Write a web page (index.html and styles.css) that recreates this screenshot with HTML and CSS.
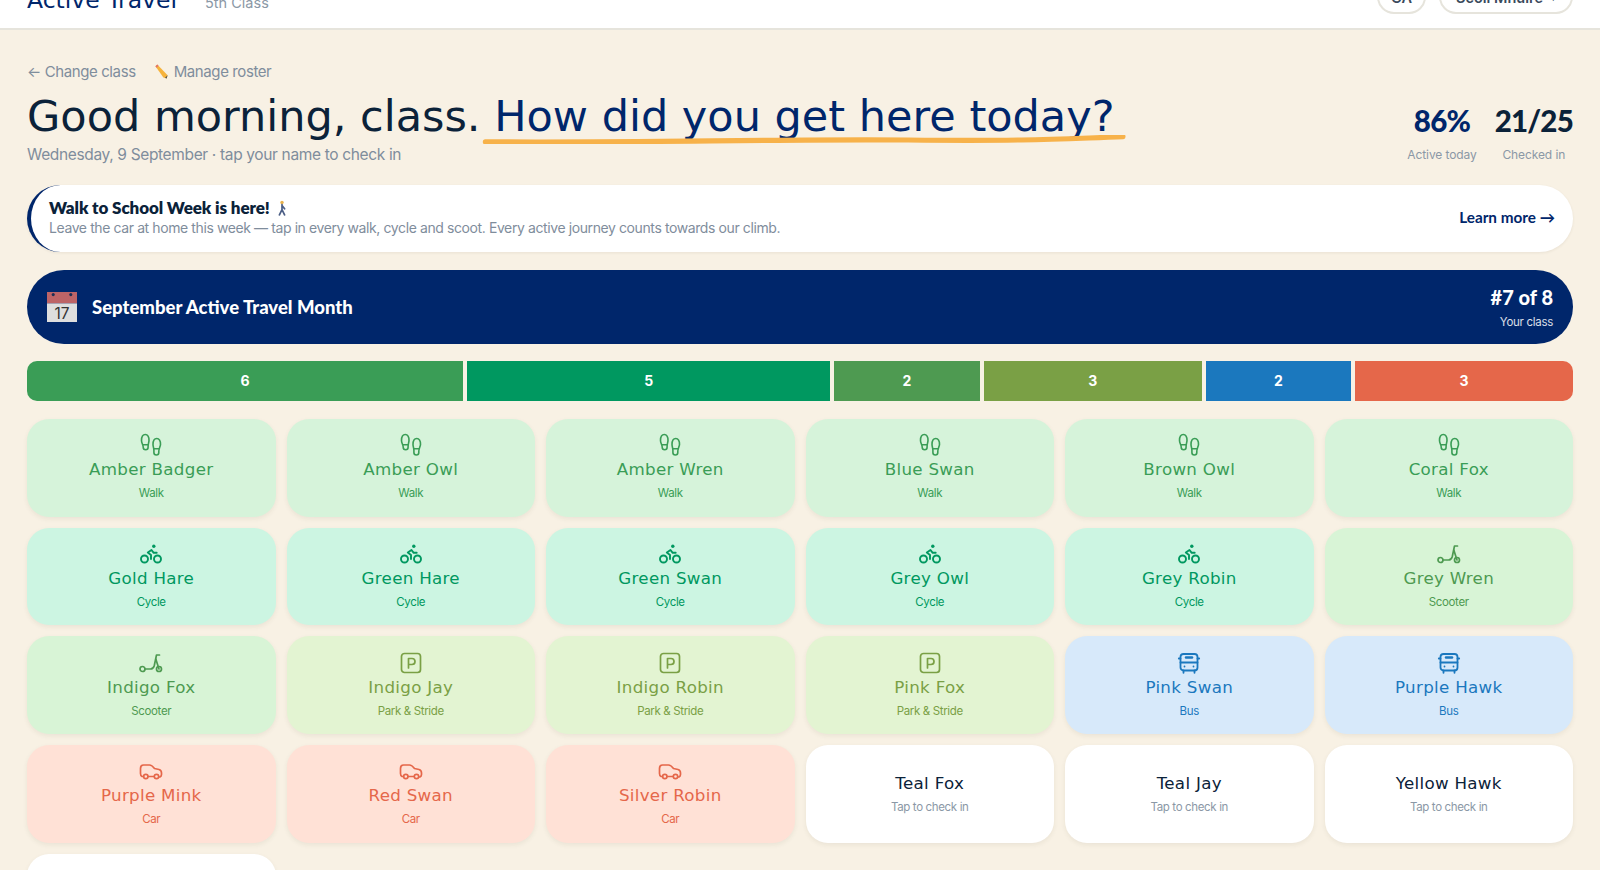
FILE: index.html
```html
<!DOCTYPE html>
<html lang="en">
<head>
<meta charset="utf-8">
<title>Active Travel</title>
<link rel="stylesheet" href="styles.css">
</head>
<body>
<svg class="defs" width="0" height="0">
  <symbol id="i-walk" viewBox="0 0 24 24"><g fill="none" stroke="currentColor" stroke-width="1.600" stroke-linecap="round" stroke-linejoin="round"><path d="M2.500 7.500C2.500 4 4 1.500 6.300 1.500s3.900 2.500 3.700 6c-.1 2-.9 3.500-.9 5.500v1.200c0 1.500-1 2.500-2.400 2.500s-2.500-1-2.500-2.500c0-2.700-1.700-3.700-1.700-6.700z"/><path d="M4.300 11.800h5"/><path d="M14 11.500c0-3.500 1.500-6 3.800-6s3.900 2.500 3.700 6c-.1 2-1.700 4-1.700 6.700v1.300c0 1.500-1 2.500-2.400 2.500s-2.500-1-2.500-2.500V17c0-2-.9-3.500-.9-5.500z"/><path d="M15 15.800h5"/></g></symbol>
  <symbol id="i-cycle" viewBox="0 0 24 24"><g fill="none" stroke="currentColor" stroke-width="1.900" stroke-linecap="round" stroke-linejoin="round"><circle cx="5.500" cy="17" r="3.500"/><circle cx="18.500" cy="17" r="3.500"/><path d="M12 17v-4l-3.200-2.500L12.500 8l2.200 2.800h3"/></g><circle cx="14.800" cy="4.300" r="1.700" fill="currentColor"/></symbol>
  <symbol id="i-scoot" viewBox="0 0 24 24"><g fill="none" stroke="currentColor" stroke-width="1.700" stroke-linecap="round" stroke-linejoin="round"><circle cx="3.500" cy="18" r="2.500"/><circle cx="20" cy="18" r="2.500"/><path d="M6 18h5.500c2 0 3.300-1.500 3.800-3.500L17.500 4h3"/><path d="M16.800 8l3.200 10"/></g></symbol>
  <symbol id="i-park" viewBox="0 0 24 24"><g fill="none" stroke="currentColor" stroke-width="1.700" stroke-linecap="round" stroke-linejoin="round"><rect x="2.500" y="2.500" width="19" height="19" rx="3"/><path d="M9.500 17V7.500h3.500a3 3 0 0 1 0 6H9.500"/></g></symbol>
  <symbol id="i-bus" viewBox="0 0 24 24"><g fill="none" stroke="currentColor" stroke-width="1.800" stroke-linecap="round" stroke-linejoin="round"><rect x="3.500" y="3" width="17" height="16.500" rx="3"/><path d="M3.500 11.500h17M1.800 7.500h1.700M20.500 7.500h1.700M6.500 19.500v2.300M17.500 19.500v2.300"/><path d="M9 6.500h6" stroke-width="2.500"/><path d="M7.500 15.500h.01M16.500 15.500h.01"/></g></symbol>
  <symbol id="i-car" viewBox="0 0 24 24"><g fill="none" stroke="currentColor" stroke-width="1.700" stroke-linecap="round" stroke-linejoin="round"><path d="M4.500 17.500H3c-1-.5-1.500-1.500-1.500-3V9.500c0-2 1-3.500 3-3.500h6c2 0 3.500 1.500 5 3.500l4.500 1c2 .5 2.500 1.800 2.500 3.500v1.500c0 1.500-.5 2-1.500 2.500H20"/><path d="M9 17.500h6"/><circle cx="6.800" cy="17.500" r="2.200"/><circle cx="17.500" cy="17.500" r="2.200"/></g></symbol>
</svg>

<header class="topbar">
  <div class="brand"><span class="logo">Active Travel</span><span class="klass">5th Class</span></div>
  <div class="pills"><span class="pill pill-short">GA</span><span class="pill">Scoil Mhuire <small>▾</small></span></div>
</header>

<main class="page">
  <nav class="links">
    <a class="link">← Change class</a>
    <a class="link">
      <svg class="pencil" viewBox="0 0 16 16"><path d="M1.500 2.500l2-2 11 11.500-1 3.500-3.500-1z" fill="#f6b33c"/><path d="M1.500 2.500l2-2 1.300 1.400-2 2z" fill="#e2736d"/><path d="M13.500 15.500l1-3.500-2.800 2.700z" fill="#555"/></svg>
      Manage roster
    </a>
  </nav>

  <section class="hero">
    <div class="hero-text">
      <h1 class="title">Good morning, class. <span class="ask">How did you get here today?<svg class="scribble" viewBox="0 0 650 8" preserveAspectRatio="none"><path d="M3 6C160 7 300 3.500 430 4.500s150-1 217-3" fill="none" stroke="#f7b24a" stroke-width="4.500" stroke-linecap="round"/></svg></span></h1>
      <p class="date">Wednesday, 9 September · tap your name to check in</p>
    </div>
    <div class="stats">
      <div class="stat"><strong class="num navy">86%</strong><span class="lbl">Active today</span></div>
      <div class="stat"><strong class="num">21/25</strong><span class="lbl">Checked in</span></div>
    </div>
  </section>

  <section class="notice">
    <div>
      <h2 class="notice-title">Walk to School Week is here!
        <svg class="walker" viewBox="0 0 14 18"><circle cx="7" cy="2.500" r="2" fill="#e9b24c"/><path d="M7 5v6M7 11l-3 6M7 11l3 6M7 6l3 4" fill="none" stroke="#4c5f86" stroke-width="2" stroke-linecap="round"/></svg>
      </h2>
      <p class="notice-sub">Leave the car at home this week — tap in every walk, cycle and scoot. Every active journey counts towards our climb.</p>
    </div>
    <a class="more">Learn more →</a>
  </section>

  <section class="month">
    <div class="month-left">
      <svg class="cal" viewBox="0 0 29 29"><rect width="29" height="11" fill="#bd6467"/><rect y="11" width="29" height="18" fill="#dedede"/><circle cx="6" cy="2.500" r="1.500" fill="#1c2f55"/><circle cx="23" cy="2.500" r="1.500" fill="#1c2f55"/><text x="14.500" y="26.500" class="cal-num">17</text></svg>
      <span class="month-title">September Active Travel Month</span>
    </div>
    <div class="rank"><strong>#7 of 8</strong><span>Your class</span></div>
  </section>

  <section class="bar">
    <span class="seg walk-fill s6">6</span>
    <span class="seg cycle-fill s5">5</span>
    <span class="seg scoot-fill s2">2</span>
    <span class="seg park-fill s3">3</span>
    <span class="seg bus-fill s2">2</span>
    <span class="seg car-fill s3">3</span>
  </section>

  <section class="grid">
    <button class="card walk"><svg class="ico"><use href="#i-walk"/></svg><b>Amber Badger</b><span>Walk</span></button>
    <button class="card walk"><svg class="ico"><use href="#i-walk"/></svg><b>Amber Owl</b><span>Walk</span></button>
    <button class="card walk"><svg class="ico"><use href="#i-walk"/></svg><b>Amber Wren</b><span>Walk</span></button>
    <button class="card walk"><svg class="ico"><use href="#i-walk"/></svg><b>Blue Swan</b><span>Walk</span></button>
    <button class="card walk"><svg class="ico"><use href="#i-walk"/></svg><b>Brown Owl</b><span>Walk</span></button>
    <button class="card walk"><svg class="ico"><use href="#i-walk"/></svg><b>Coral Fox</b><span>Walk</span></button>

    <button class="card cycle"><svg class="ico"><use href="#i-cycle"/></svg><b>Gold Hare</b><span>Cycle</span></button>
    <button class="card cycle"><svg class="ico"><use href="#i-cycle"/></svg><b>Green Hare</b><span>Cycle</span></button>
    <button class="card cycle"><svg class="ico"><use href="#i-cycle"/></svg><b>Green Swan</b><span>Cycle</span></button>
    <button class="card cycle"><svg class="ico"><use href="#i-cycle"/></svg><b>Grey Owl</b><span>Cycle</span></button>
    <button class="card cycle"><svg class="ico"><use href="#i-cycle"/></svg><b>Grey Robin</b><span>Cycle</span></button>
    <button class="card scoot"><svg class="ico"><use href="#i-scoot"/></svg><b>Grey Wren</b><span>Scooter</span></button>

    <button class="card scoot"><svg class="ico"><use href="#i-scoot"/></svg><b>Indigo Fox</b><span>Scooter</span></button>
    <button class="card park"><svg class="ico"><use href="#i-park"/></svg><b>Indigo Jay</b><span>Park &amp; Stride</span></button>
    <button class="card park"><svg class="ico"><use href="#i-park"/></svg><b>Indigo Robin</b><span>Park &amp; Stride</span></button>
    <button class="card park"><svg class="ico"><use href="#i-park"/></svg><b>Pink Fox</b><span>Park &amp; Stride</span></button>
    <button class="card bus"><svg class="ico"><use href="#i-bus"/></svg><b>Pink Swan</b><span>Bus</span></button>
    <button class="card bus"><svg class="ico"><use href="#i-bus"/></svg><b>Purple Hawk</b><span>Bus</span></button>

    <button class="card car"><svg class="ico"><use href="#i-car"/></svg><b>Purple Mink</b><span>Car</span></button>
    <button class="card car"><svg class="ico"><use href="#i-car"/></svg><b>Red Swan</b><span>Car</span></button>
    <button class="card car"><svg class="ico"><use href="#i-car"/></svg><b>Silver Robin</b><span>Car</span></button>
    <button class="card"><b>Teal Fox</b><span>Tap to check in</span></button>
    <button class="card"><b>Teal Jay</b><span>Tap to check in</span></button>
    <button class="card"><b>Yellow Hawk</b><span>Tap to check in</span></button>

    <button class="card"><b>Yellow Owl</b><span>Tap to check in</span></button>
  </section>
</main>
</body>
</html>
```

FILE: styles.css
```css
* { box-sizing: border-box; }
html, body { margin: 0; height: 870px; overflow: hidden; }
body {
  background: #f8f1e4;
  color: #0b2239;
  font-family: Inter, "Liberation Sans", sans-serif;
}
.defs { position: absolute; }

.topbar {
  height: 30px;
  background: #fff;
  border-bottom: 2px solid #e6e4dc;
  display: flex;
  justify-content: space-between;
  align-items: flex-end;
  padding: 0 27px 14px;
  overflow: hidden;
}
.brand { display: flex; align-items: baseline; gap: 28px; margin-bottom: 1px; }
.logo { font: 400 23.500px/26px "DejaVu Sans", sans-serif; color: #00266b; }
.klass { font-size: 14.500px; color: #8b98a6; }
.pills { display: flex; gap: 13px; }
.pill {
  height: 34px;
  padding: 0 15px;
  border: 2px solid #e6e4dc;
  border-radius: 17px;
  display: flex;
  align-items: center;
  gap: 8px;
  font-size: 14.500px;
  font-weight: 600;
  color: #3a4a5c;
}
.pill-short { width: 49px; justify-content: center; padding: 0; }
.pill small { font-size: 9px; }

.page { padding: 31px 27px 0; }

.links { display: flex; gap: 18px; height: 20px; align-items: center; }
.link { font-size: 15px; letter-spacing: -.4px; color: #7f8d9c; display: flex; align-items: center; gap: 5px; }
.pencil { width: 15px; height: 15px; }

.hero { display: flex; justify-content: space-between; align-items: flex-end; margin-top: 10px; }
.title {
  margin: 0;
  font: 400 43px/50px "DejaVu Sans", sans-serif;
  white-space: nowrap;
}
.ask { position: relative; color: #00266b; }
.scribble { position: absolute; left: -12px; bottom: -3px; width: calc(100% + 24px); height: 9px; }
.date { margin: 4px 0 0; font-size: 15.500px; line-height: 20px; letter-spacing: -.35px; color: #7f8d9c; }
.stats { display: flex; gap: 18px; margin-bottom: 0; }
.stat { display: flex; flex-direction: column; align-items: center; }
.num { font: 900 29.500px/38px Lato, sans-serif; letter-spacing: -.8px; color: #0b2239; }
.num.navy { color: #00266b; }
.lbl { font-size: 12px; line-height: 20px; margin-top: 5px; letter-spacing: -.1px; color: #8b98a6; }

.notice {
  margin-top: 20px;
  height: 67px;
  background: #fff;
  border-left: 4px solid #00266b;
  border-radius: 34px;
  display: flex;
  justify-content: space-between;
  align-items: center;
  padding: 0 18px 3px;
  box-shadow: 0 1px 3px rgba(60,50,30,.08);
}
.notice-title { margin: 0; font: 800 17px/21px Lato, sans-serif; letter-spacing: -.1px; }
.walker { width: 12px; height: 16px; vertical-align: -2px; margin-left: 3px; }
.notice-sub { margin: 0; font-size: 14px; line-height: 19px; letter-spacing: -.4px; color: #7f8d9c; }
.more { font: 700 15.300px/20px Lato, sans-serif; color: #00266b; }

.month {
  margin-top: 18px;
  height: 74px;
  background: #00266b;
  border-radius: 37px;
  color: #fff;
  display: flex;
  justify-content: space-between;
  align-items: center;
  padding: 0 20px;
}
.month-left { display: flex; align-items: center; gap: 15px; }
.cal { width: 30px; height: 30px; display: block; }
.cal-num { font: 400 15px Inter, sans-serif; fill: #333; text-anchor: middle; }
.month-title { font: 900 18.500px/24px Lato, sans-serif; }
.rank { display: flex; flex-direction: column; align-items: flex-end; }
.rank strong { font: 900 20px/26px Lato, sans-serif; }
.rank span { font-size: 11.500px; line-height: 18px; margin-top: 3px; letter-spacing: -.3px; opacity: .85; }

.bar {
  margin-top: 17px;
  height: 40px;
  display: flex;
  gap: 4px;
  border-radius: 10px;
  overflow: hidden;
}
.seg { display: flex; align-items: center; justify-content: center; color: #fff; font-size: 14px; font-weight: 700; padding-bottom: 1px; }
.s6 { flex: 6; } .s5 { flex: 5; } .s3 { flex: 3; } .s2 { flex: 2; }
.walk-fill { background: #3a9d56; }
.cycle-fill { background: #009860; }
.scoot-fill { background: #4e9a51; }
.park-fill { background: #7aa045; }
.bus-fill { background: #1b78be; }
.car-fill { background: #e5674a; }

.grid {
  margin-top: 18px;
  display: grid;
  grid-template-columns: repeat(6, 1fr);
  grid-auto-rows: 97.700px;
  gap: 11px;
}
.card {
  border: 0;
  border-radius: 22px;
  background: #fff;
  color: #0b2239;
  font-family: inherit;
  display: flex;
  flex-direction: column;
  align-items: center;
  justify-content: center;
  padding: 0 0 1px;
  box-shadow: 0 2px 5px rgba(60,50,30,.07);
}
.card b { font: 400 16.700px/22px "DejaVu Sans", sans-serif; letter-spacing: .3px; }
.card span { font-size: 11.500px; line-height: 16px; margin-top: 5px; letter-spacing: -.35px; color: #8b98a6; }
.card .ico { width: 24px; height: 24px; margin-bottom: 1px; }
.walk { background: #d6f3da; color: #3a9d56; }
.cycle { background: #ccf5e2; color: #009860; }
.scoot { background: #d8f4d6; color: #4e9a51; }
.park { background: #e3f4d2; color: #7aa045; }
.bus { background: #d7e9fa; color: #1b78be; }
.car { background: #ffe1d6; color: #e5674a; }
.walk span, .cycle span, .scoot span, .park span, .bus span, .car span { color: inherit; }
```
